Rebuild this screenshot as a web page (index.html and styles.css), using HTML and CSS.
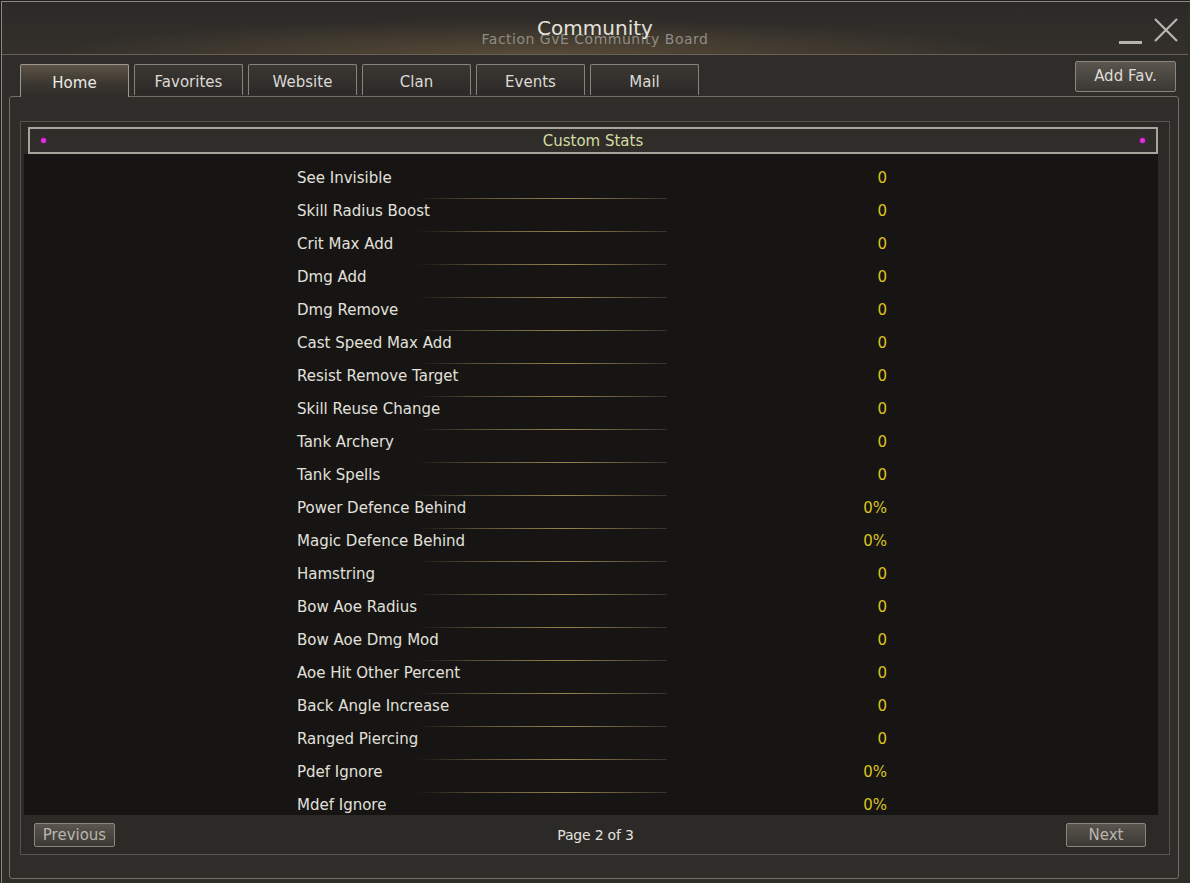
FILE: index.html
```html
<!DOCTYPE html>
<html lang="en">
<head>
    <meta charset="UTF-8">
    <title>Community</title>
    <link rel="stylesheet" href="styles.css">
</head>
<body>
    <div class="window">
        <div class="titlebar">
            <div class="title">Community</div>
            <div class="subtitle">Faction GvE Community Board</div>
            <div class="controls">
                <span class="minimize"></span>
                <svg class="close" width="26" height="26" viewBox="0 0 26 26">
                    <path d="M2 2 L24 24 M24 2 L2 24" stroke="#b9b7b2" stroke-width="2.2" fill="none"/>
                </svg>
            </div>
        </div>
        <div class="tabbar">
            <div class="tabs">
                <span class="tab active">Home</span>
                <span class="tab">Favorites</span>
                <span class="tab">Website</span>
                <span class="tab">Clan</span>
                <span class="tab">Events</span>
                <span class="tab">Mail</span>
            </div>
            <span class="btn add-fav">Add Fav.</span>
        </div>
        <div class="panel">
            <div class="inner">
                <div class="box-header">
                    <span class="dot"></span>
                    <span class="box-title">Custom Stats</span>
                    <span class="dot"></span>
                </div>
                <div class="content">
                    <div class="row"><span class="label">See Invisible</span><span class="value">0</span></div>
                    <div class="row"><span class="label">Skill Radius Boost</span><span class="value">0</span></div>
                    <div class="row"><span class="label">Crit Max Add</span><span class="value">0</span></div>
                    <div class="row"><span class="label">Dmg Add</span><span class="value">0</span></div>
                    <div class="row"><span class="label">Dmg Remove</span><span class="value">0</span></div>
                    <div class="row"><span class="label">Cast Speed Max Add</span><span class="value">0</span></div>
                    <div class="row"><span class="label">Resist Remove Target</span><span class="value">0</span></div>
                    <div class="row"><span class="label">Skill Reuse Change</span><span class="value">0</span></div>
                    <div class="row"><span class="label">Tank Archery</span><span class="value">0</span></div>
                    <div class="row"><span class="label">Tank Spells</span><span class="value">0</span></div>
                    <div class="row"><span class="label">Power Defence Behind</span><span class="value">0%</span></div>
                    <div class="row"><span class="label">Magic Defence Behind</span><span class="value">0%</span></div>
                    <div class="row"><span class="label">Hamstring</span><span class="value">0</span></div>
                    <div class="row"><span class="label">Bow Aoe Radius</span><span class="value">0</span></div>
                    <div class="row"><span class="label">Bow Aoe Dmg Mod</span><span class="value">0</span></div>
                    <div class="row"><span class="label">Aoe Hit Other Percent</span><span class="value">0</span></div>
                    <div class="row"><span class="label">Back Angle Increase</span><span class="value">0</span></div>
                    <div class="row"><span class="label">Ranged Piercing</span><span class="value">0</span></div>
                    <div class="row"><span class="label">Pdef Ignore</span><span class="value">0%</span></div>
                    <div class="row"><span class="label">Mdef Ignore</span><span class="value">0%</span></div>
                </div>
                <div class="footer">
                    <span class="btn page-btn prev">Previous</span>
                    <span class="page-info">Page 2 of 3</span>
                    <span class="btn page-btn next">Next</span>
                </div>
            </div>
        </div>
    </div>
</body>
</html>
```

FILE: styles.css
```css
html, body { margin: 0; padding: 0; }
body { width: 1190px; height: 883px; overflow: hidden; background: #1f1e1c; font-family: "DejaVu Sans", Verdana, sans-serif; color: #e0deda; }
.window { box-sizing: border-box; width: 1200px; height: 900px; margin: 1px 0 0 1px; padding: 0 0 0 7px; border-top: 1px solid #8c8983; border-left: 1px solid #8c8983; background: #2f2d2a; }

.titlebar { position: relative; width: 1186px; height: 52px; margin-left: -7px; border-bottom: 1px solid #6b6253; background: radial-gradient(ellipse 480px 34px at 45% 100%, rgba(130, 105, 70, 0.45), rgba(0, 0, 0, 0) 100%), linear-gradient(#2c2a27, #33302b); text-align: center; }
.title { padding-top: 14px; font-size: 20px; line-height: 24px; color: #e4e2de; position: relative; z-index: 1; }
.subtitle { margin-top: -10px; font-size: 14px; line-height: 18px; color: #8f8c86; letter-spacing: 0.5px; }
.controls { position: absolute; top: 15px; left: 1117px; display: flex; align-items: flex-end; gap: 11px; }
.minimize { display: block; width: 23px; height: 3px; background: #b5b3ae; margin-bottom: -1px; }
.close { display: block; }

.tabbar { display: flex; justify-content: space-between; align-items: flex-end; width: 1170px; height: 41px; }
.tabs { display: flex; gap: 5px; padding-left: 11px; position: relative; z-index: 2; margin-bottom: -1px; }
.tab { box-sizing: border-box; width: 109px; height: 31px; padding-top: 3px; border: 1px solid #86837c; border-bottom: none; border-radius: 2px 2px 0 0; background: linear-gradient(#3a3733, #2b2926); font-size: 15px; line-height: 28px; text-align: center; color: #dcdad5; }
.tab.active { height: 33px; padding-top: 4px; line-height: 29px; border-color: #9c978f; background: linear-gradient(#5c5246, #3a3630 60%, #2f2d2a); color: #ecebe7; }
.btn { box-sizing: border-box; border: 1px solid #8a867e; border-radius: 2px; background: linear-gradient(#5a554e, #3b3833); color: #dedcd7; text-align: center; }
.add-fav { width: 101px; height: 31px; margin: 0 3px 4px 0; font-size: 15px; line-height: 29px; }

.panel { box-sizing: border-box; width: 1170px; height: 783px; padding: 24px 8px 23px 10px; border: 1px solid #716e68; border-radius: 3px; background: #2f2d2a; }
.inner { box-sizing: border-box; height: 734px; padding: 5px 11px 0 3px; border: 1px solid #56534e; background: #2b2a27; }
.box-header { box-sizing: border-box; display: flex; justify-content: space-between; align-items: center; height: 27px; margin-left: 4px; padding: 0 11px; border: 2px solid #a7a49e; background: #2f2d29; }
.box-title { font-size: 15px; color: #d5dca2; }
.dot { width: 5px; height: 5px; border-radius: 50%; background: #e030e0; box-shadow: 0 0 3px #b010b0; }

.content { height: 661px; overflow: hidden; padding-top: 8px; box-sizing: border-box; background: #161513; }
.row { display: flex; height: 33px; margin-left: 273px; }
.label { width: 370px; padding-top: 6px; font-size: 15px; line-height: 20px; color: #e2e0dc; }
.row + .row .label { background: linear-gradient(90deg, rgba(90, 80, 50, 0), #5d5235 25%, #94824f 60%, #5c5138 85%, #34302a) no-repeat right 0 top 3px / 250px 1px; }
.value { width: 220px; padding-top: 6px; font-size: 15px; line-height: 20px; text-align: right; color: #dcc41c; }

.footer { display: flex; justify-content: space-between; align-items: center; height: 39px; padding: 0 12px 0 10px; }
.page-btn { height: 24px; font-size: 15px; line-height: 22px; color: #b9b5ad; }
.prev { width: 81px; }
.next { width: 80px; }
.page-info { font-size: 14px; letter-spacing: -0.2px; color: #e4e2de; margin-left: 10px; }
```
